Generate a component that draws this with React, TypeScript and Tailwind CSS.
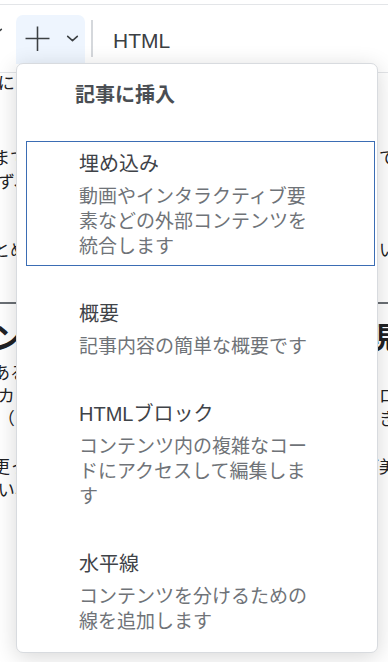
const items = [
  {
    title: '埋め込み',
    desc: '動画やインタラクティブ要素などの外部コンテンツを統合します',
    active: true,
  },
  { title: '概要', desc: '記事内容の簡単な概要です', active: false },
  {
    title: 'HTMLブロック',
    desc: 'コンテンツ内の複雑なコードにアクセスして編集します',
    active: false,
  },
  { title: '水平線', desc: 'コンテンツを分けるための線を追加します', active: false },
];

function Chevron({ className }: { className?: string }) {
  return (
    <svg viewBox="0 0 14 8" className={className} fill="none" stroke="currentColor" strokeWidth="1.8" strokeLinecap="round" strokeLinejoin="round">
      <path d="M1.5 1.5 7 6.5l5.5-5" />
    </svg>
  );
}

// a line of the article; only its two ends show beside the menu
function EdgeRow({ left, right, className = '' }: { left: string; right: string; className?: string }) {
  return (
    <div className={`flex justify-between whitespace-nowrap ${className}`}>
      <span className="-ml-[7px]">{left}</span>
      <span className="-mr-[8px]">{right}</span>
    </div>
  );
}

export default function App() {
  return (
    <div
      className="relative h-[662px] w-[388px] overflow-hidden bg-white text-[#202124]"
      style={{ fontFamily: '"Liberation Sans", "Noto Sans CJK JP", sans-serif' }}
    >
      {/* toolbar */}
      <div className="mt-[4px] flex h-[69px] items-start border-y border-[#e3e5e8]">
        <div className="mt-[3px] w-[16px] text-[#3c4043]">
          <Chevron className="-ml-[10px] mt-[20px] h-[7px] w-[13px]" />
        </div>
        <div className="mt-[10px] flex h-[49px] w-[69px] items-center rounded-t-[7px] bg-[#eef5fe] pb-[2px] text-[#3c4043]">
          <svg viewBox="0 0 24 24" className="ml-[9px] h-[25px] w-[25px]" stroke="currentColor" strokeWidth="1.5" fill="none">
            <path d="M0.5 12h23M12 0.5v24" />
          </svg>
          <Chevron className="ml-[16px] h-[7px] w-[13px]" />
        </div>
        <div className="ml-[6px] mt-[15px] h-[37px] w-[2px] bg-[#d5d8dc]" />
        <div className="ml-[20px] mt-[24px] text-[21px] leading-[24px] text-[#3c4043]">HTML</div>
      </div>

      {/* article behind the menu */}
      <div className="text-[17px] leading-[24px]">
        <EdgeRow left={'\u00a0に'} right="" className="-mt-[1px]" />
        <EdgeRow left="までで" right="て" className="mt-[51px]" />
        <EdgeRow left={'\u00a0ず、'} right="" />
        <EdgeRow left="とめ" right="い" className="mt-[44px]" />
        <div className="mt-[39px] h-[2px] bg-[#6b7075]" />
        <EdgeRow left="ン" right="現" className="mt-[14px] text-[30px] font-bold leading-[40px]" />
        <EdgeRow left="ある" right="" className="mt-[4px] leading-[23px]" />
        <EdgeRow left={'\u00a0カ'} right="ロ" className="leading-[23px]" />
        <EdgeRow left={'\u00a0（'} right="き" className="leading-[23px]" />
        <EdgeRow left="更っ" right="ご美" className="mt-[25px] leading-[23px]" />
        <EdgeRow left={'\u00a0い、'} right="" className="leading-[23px]" />
      </div>

      {/* insert menu */}
      <div className="absolute left-[16px] top-[63px] h-[590px] w-[362px] rounded-[7px] border border-[#d8dbdf] bg-white shadow-[0_4px_22px_rgba(0,0,0,0.16)]">
        <div className="ml-[58px] mt-[18px] text-[20px] font-bold leading-[26px] text-[#4a4e53]">記事に挿入</div>
        <div className="ml-[9px] mr-[2px] mt-[33px] flex flex-col gap-[25px]">
          {items.map((it) => (
            <div
              key={it.title}
              className={`border pb-[6px] pl-[52px] pt-[9px] ${it.active ? 'border-[#3b6db4]' : 'border-transparent'}`}
            >
              <div className="text-[20px] leading-[26px] text-[#3f4348]">{it.title}</div>
              <div className="mt-[7px] w-[236px] text-[19px] leading-[25px] text-[#6f7378]">{it.desc}</div>
            </div>
          ))}
        </div>
      </div>
    </div>
  );
}
